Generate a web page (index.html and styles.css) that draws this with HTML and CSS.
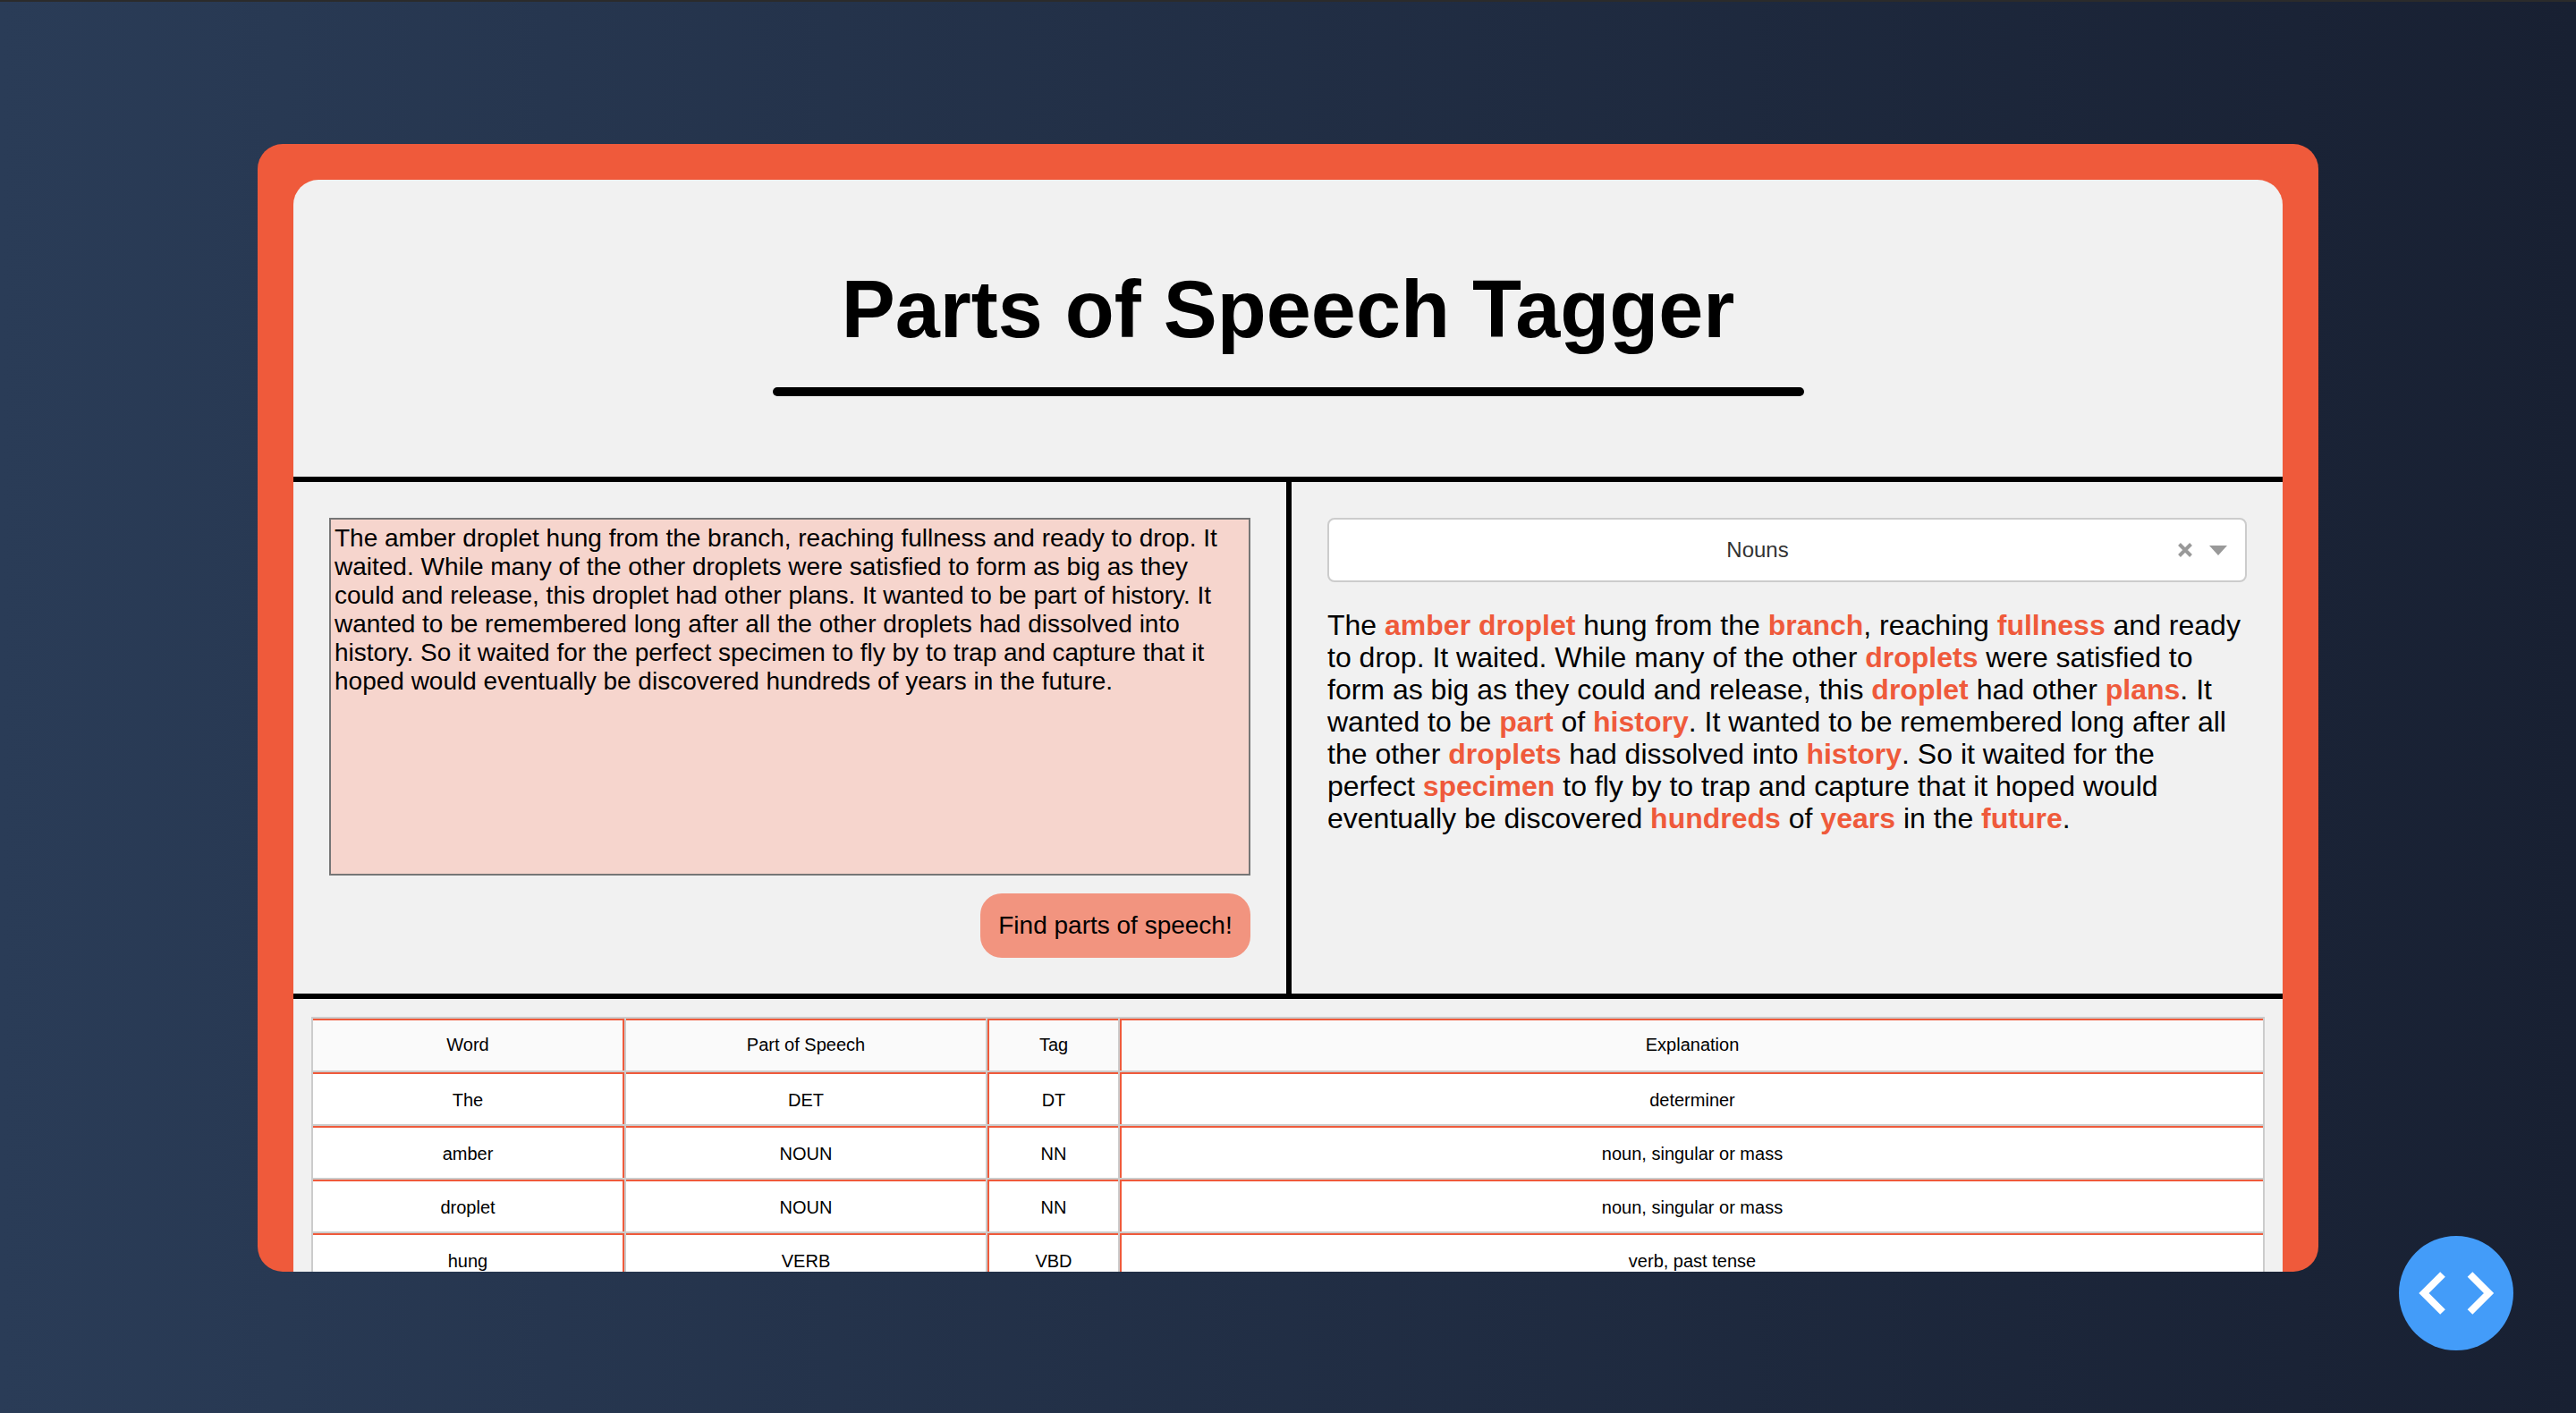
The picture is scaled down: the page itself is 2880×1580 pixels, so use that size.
FILE: index.html
```html
<!DOCTYPE html>
<html lang="en">
<head>
<meta charset="utf-8">
<title>Parts of Speech Tagger</title>
<link rel="stylesheet" href="styles.css">
</head>
<body>
<div class="topstrip"></div>
<main class="stage">
  <section class="card">
    <div class="panel">
      <header class="header">
        <h1 class="title">Parts of Speech Tagger</h1>
        <div class="underline"></div>
      </header>
      <div class="split">
        <div class="input-pane">
          <textarea class="input-text" spellcheck="false">The amber droplet hung from the branch, reaching fullness and ready to drop. It waited. While many of the other droplets were satisfied to form as big as they could and release, this droplet had other plans. It wanted to be part of history. It wanted to be remembered long after all the other droplets had dissolved into history. So it waited for the perfect specimen to fly by to trap and capture that it hoped would eventually be discovered hundreds of years in the future.</textarea>
          <button class="find-btn" type="button">Find parts of speech!</button>
        </div>
        <div class="output-pane">
          <div class="select">
            <div class="select-value">Nouns</div>
            <div class="select-icons">
              <svg class="icon-clear" width="16" height="16" viewBox="0 0 16 16"><path d="M1.5 1.5L14.5 14.5M14.5 1.5L1.5 14.5"/></svg>
              <span class="icon-caret"></span>
            </div>
          </div>
          <p class="tagged">The <b>amber</b> <b>droplet</b> hung from the <b>branch</b>, reaching <b>fullness</b> and ready to drop. It waited. While many of the other <b>droplets</b> were satisfied to form as big as they could and release, this <b>droplet</b> had other <b>plans</b>. It wanted to be <b>part</b> of <b>history</b>. It wanted to be remembered long after all the other <b>droplets</b> had dissolved into <b>history</b>. So it waited for the perfect <b>specimen</b> to fly by to trap and capture that it hoped would eventually be discovered <b>hundreds</b> of <b>years</b> in the <b>future</b>.</p>
        </div>
      </div>
      <div class="table-wrap">
        <table class="pos-table">
          <colgroup>
            <col class="col-word"><col class="col-pos"><col class="col-tag"><col class="col-exp">
          </colgroup>
          <thead>
            <tr><th class="c1">Word</th><th>Part of Speech</th><th class="cl">Tag</th><th class="cl">Explanation</th></tr>
          </thead>
          <tbody>
            <tr><td class="c1">The</td><td>DET</td><td class="cl">DT</td><td class="cl">determiner</td></tr>
            <tr><td class="c1">amber</td><td>NOUN</td><td class="cl">NN</td><td class="cl">noun, singular or mass</td></tr>
            <tr><td class="c1">droplet</td><td>NOUN</td><td class="cl">NN</td><td class="cl">noun, singular or mass</td></tr>
            <tr><td class="c1">hung</td><td>VERB</td><td class="cl">VBD</td><td class="cl">verb, past tense</td></tr>
          </tbody>
        </table>
      </div>
    </div>
  </section>
</main>
<button class="fab" type="button" aria-label="View code">
  <svg width="128" height="128" viewBox="0 0 128 128"><path d="M49 43L28 64L49 85M79.5 43L100.5 64L79.5 85"/></svg>
</button>
</body>
</html>
```
FILE: styles.css
```css
* { box-sizing: border-box; }
html, body { height: 100%; }
body {
  margin: 0;
  height: 1580px;
  display: flex;
  flex-direction: column;
  overflow: hidden;
  font-family: "Liberation Sans", Arial, sans-serif;
  color: #000;
  background: linear-gradient(90deg, #2a3c57 0%, #182032 100%);
}
.topstrip { height: 2px; background: #2b2b2b; flex: none; }
.stage {
  flex: 1;
  min-height: 0;
  padding-top: 1px;
  display: flex;
  align-items: center;
  justify-content: center;
}
.card {
  width: 2304px;
  height: 1261px;
  padding: 40px 40px 0;
  background: #ef5a3b;
  border-radius: 28px;
  overflow: hidden;
}
.panel {
  min-height: 100%;
  background: #f1f1f1;
  border-radius: 28px 28px 0 0;
  overflow: hidden;
}
.header {
  height: 332px;
  padding-top: 93px;
  display: flex;
  flex-direction: column;
  align-items: center;
}
.title {
  margin: 0;
  font-size: 90px;
  line-height: 104px;
  font-weight: 700;
}
.underline {
  width: 1153px;
  height: 10px;
  margin-top: 35px;
  background: #000;
  border-radius: 5px;
}
.split {
  display: grid;
  grid-template-columns: 1116px 1fr;
  border-top: 6px solid #000;
  border-bottom: 6px solid #000;
}
.input-pane {
  display: flex;
  flex-direction: column;
  align-items: flex-end;
  gap: 20px;
  padding: 40px;
  border-right: 6px solid #000;
}
.input-text {
  display: block;
  width: 100%;
  height: 400px;
  padding: 5px 4px 2px;
  border: 2px solid #767676;
  border-radius: 0;
  background: #f6d5cd;
  color: #000;
  font-family: "Liberation Sans", Arial, sans-serif;
  font-size: 28px;
  line-height: 32px;
  resize: none;
  outline: none;
  overflow: hidden;
}
.find-btn {
  height: 72px;
  width: 302px;
  padding: 0;
  border: none;
  border-radius: 24px;
  background: #f2947f;
  color: #000;
  font-family: "Liberation Sans", Arial, sans-serif;
  font-size: 28px;
}
.output-pane { padding: 40px; }
.select {
  display: flex;
  align-items: center;
  height: 72px;
  background: #fff;
  border: 2px solid #ccc;
  border-radius: 8px;
}
.select-value {
  flex: 1;
  padding-left: 9px;
  text-align: center;
  font-size: 24px;
  color: #333;
}
.select-icons {
  display: flex;
  align-items: center;
  gap: 19px;
  padding-right: 20px;
}
.icon-clear { display: block; }
.icon-clear path { fill: none; stroke: #999; stroke-width: 4; }
.icon-caret {
  display: block;
  width: 0;
  height: 0;
  border-left: 10px solid transparent;
  border-right: 10px solid transparent;
  border-top: 11px solid #999;
}
.tagged {
  margin: 30px 0 0;
  font-size: 32px;
  line-height: 36px;
}
.tagged b { color: #ef5a3b; font-weight: 700; }
.table-wrap { padding: 20px 20px 0; }
.pos-table {
  width: 2184px;
  table-layout: fixed;
  border-collapse: separate;
  border-spacing: 2px;
  background: #ccc;
  font-size: 20px;
}
.col-word { width: 348px; }
.col-pos { width: 402px; }
.col-tag { width: 146px; }
.col-exp { width: 1278px; }
.pos-table th, .pos-table td {
  height: 58px;
  padding: 0;
  text-align: center;
  font-weight: 400;
  background: #fff;
  border-top: 2px solid #ef5a3b;
}
.pos-table td { padding-top: 2px; }
.pos-table th { background: #fafafa; padding-bottom: 2px; }
.pos-table .c1 { border-right: 2px solid #ef5a3b; }
.pos-table .cl { border-left: 2px solid #ef5a3b; }
.fab {
  position: absolute;
  left: 2682px;
  top: 1382px;
  width: 128px;
  height: 128px;
  padding: 0;
  border: none;
  border-radius: 50%;
  background: #439cf9;
}
.fab svg { display: block; }
.fab path { fill: none; stroke: #fff; stroke-width: 8; }
```
